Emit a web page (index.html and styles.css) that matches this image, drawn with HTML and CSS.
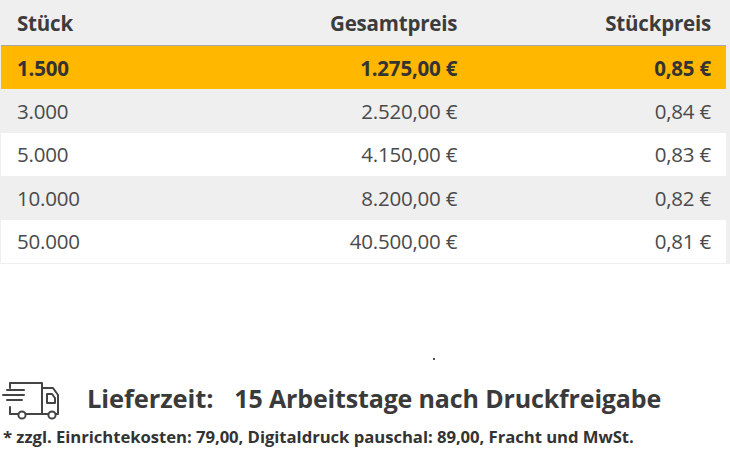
FILE: index.html
```html
<!DOCTYPE html>
<html lang="de">
<head>
<meta charset="utf-8">
<title>Staffelpreise</title>
<link rel="stylesheet" href="styles.css">
</head>
<body>
<div class="prices">
  <table class="price-table">
    <colgroup>
      <col class="c1"><col class="c2"><col class="c3">
    </colgroup>
    <thead>
      <tr><th class="left">Stück</th><th>Gesamtpreis</th><th>Stückpreis</th></tr>
    </thead>
    <tbody>
      <tr class="active"><td class="left">1.500</td><td>1.275,00 €</td><td>0,85 €</td></tr>
      <tr class="odd"><td class="left">3.000</td><td>2.520,00 €</td><td>0,84 €</td></tr>
      <tr class="even"><td class="left">5.000</td><td>4.150,00 €</td><td>0,83 €</td></tr>
      <tr class="odd"><td class="left">10.000</td><td>8.200,00 €</td><td>0,82 €</td></tr>
      <tr class="even"><td class="left">50.000</td><td>40.500,00 €</td><td>0,81 €</td></tr>
    </tbody>
  </table>
</div>
<div class="spacer"><span class="dot"></span></div>
<div class="delivery">
  <svg class="truck" viewBox="0 0 60 45" width="60" height="45" fill="none" stroke="#444" stroke-width="2" stroke-linecap="round" stroke-linejoin="round">
    <path d="M8 12 V7 H40 V38"/>
    <path d="M5 14 H22 M1 19 H22 M5 24 H20"/>
    <path d="M8 31 V38 H16"/>
    <path d="M24 38 H46"/>
    <path d="M40 12 H51 L56 19 V38 H54"/>
    <path d="M45 18 H50 L53 22 V27 H45 Z"/>
    <circle cx="20" cy="39" r="3.6"/>
    <circle cx="50" cy="39" r="3.6"/>
  </svg>
  <span class="label">Lieferzeit:</span>
  <span class="value">15 Arbeitstage nach Druckfreigabe</span>
</div>
<p class="note">* zzgl. Einrichtekosten: 79,00, Digitaldruck pauschal: 89,00, Fracht und MwSt.</p>
</body>
</html>
```
FILE: styles.css
```css
html, body {
  margin: 0;
  padding: 0;
  background: #ffffff;
}
body {
  font-family: "Open Sans", "Noto Sans", sans-serif;
  color: #3a3a3a;
  width: 730px;
  height: 470px;
  overflow: hidden;
}
.prices {
  background: #efefef;
  padding: 0 4px 1px 1px;
}
.price-table {
  width: 725px;
  border-collapse: collapse;
  table-layout: fixed;
}
.c1 { width: 35%; }
.c2 { width: 30%; }
.c3 { width: 35%; }
.price-table th,
.price-table td {
  text-align: right;
  padding: 0 15px 0 16px;
  white-space: nowrap;
}
.price-table .left { text-align: left; }
.price-table th {
  height: 45px;
  font-size: 20.5px;
  font-weight: 700;
  color: #3c3c3c;
  border-bottom: 1px solid #a9a9a9;
  letter-spacing: -0.2px;
}
.price-table td {
  height: 43.4px;
  font-size: 20.5px;
  color: #4a4a4a;
  letter-spacing: -0.2px;
}
.price-table tr.active td {
  background: #ffb700;
  font-weight: 700;
  color: #333333;
}
.price-table tr.odd td { background: #efefef; }
.price-table tr.even td { background: #ffffff; }
.spacer {
  height: 112px;
  position: relative;
}
.dot {
  position: absolute;
  left: 433px;
  top: 94px;
  width: 2px;
  height: 2px;
  background: #555;
}
.delivery {
  display: flex;
  align-items: center;
  height: 45px;
  padding-left: 2px;
}
.truck {
  flex: none;
  margin-right: 25px;
}
.label,
.value {
  font-weight: 700;
  color: #3a3a3a;
}
.label {
  font-size: 25.5px;
  letter-spacing: -0.1px;
  margin-right: 21px;
}
.value {
  font-size: 25px;
  letter-spacing: -0.15px;
}
.note {
  margin: 6px 0 0 3px;
  font-size: 16.7px;
  font-weight: 700;
  color: #333333;
  line-height: 20px;
  letter-spacing: -0.05px;
}
```
